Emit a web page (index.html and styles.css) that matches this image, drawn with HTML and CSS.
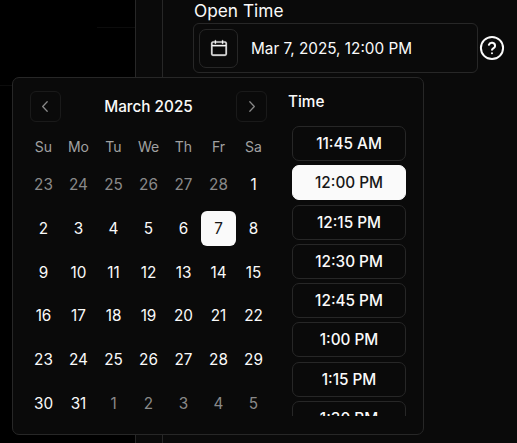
FILE: index.html
```
<!DOCTYPE html>
<html lang="en">
<head>
<meta charset="utf-8">
<title>Open Time</title>
<link rel="stylesheet" href="styles.css">
</head>
<body>
<div class="page">
  <aside class="side"><div class="rule rule-top"></div><div class="rule rule-low"></div></aside>
  <main class="sheet">
    <section class="form">
      <label class="label">Open Time</label>
      <div class="row">
        <div class="field">
          <button class="cal-btn"><svg width="18" height="18" viewBox="0 0 15 15" fill="currentColor"><path fill-rule="evenodd" d="M4.5 1a.5.5 0 0 1 .5.5V2h5v-.5a.5.5 0 0 1 1 0V2h1.5A1.5 1.5 0 0 1 14 3.500v9a1.500 1.500 0 0 1-1.500 1.500h-10A1.500 1.500 0 0 1 1 12.500v-9A1.500 1.500 0 0 1 2.500 2H4v-.5a.5.5 0 0 1 .5-.5ZM10 3v.5a.5.5 0 0 0 1 0V3h1.500a.5.5 0 0 1 .5.5V5H2V3.500a.5.5 0 0 1 .5-.5H4v.5a.5.5 0 0 0 1 0V3h5ZM2 6v6.500a.5.5 0 0 0 .5.5h10a.5.5 0 0 0 .5-.5V6H2Z" stroke="currentColor" stroke-width=".3"/></svg></button>
          <span class="value">Mar 7, 2025, 12:00 PM</span>
        </div>
        <svg class="help" width="28" height="28" viewBox="0 0 24 24" fill="none" stroke="currentColor" stroke-width="1.7" stroke-linecap="round" stroke-linejoin="round"><circle cx="12" cy="12" r="9.500"/><path d="M9.300 9.300a2.750 2.750 0 0 1 5.350.9c0 1.750-2.650 2.300-2.650 3.400M12 16.400v.1"/></svg>
      </div>
    </section>
  </main>
</div>
<div class="popover">
  <div class="calendar">
    <div class="head">
      <button class="nav"><svg width="17" height="17" viewBox="0 0 15 15" fill="none" stroke="currentColor" stroke-width="1.1" stroke-linecap="round" stroke-linejoin="round"><path d="M9 3.300 5 7.500l4 4.200"/></svg></button>
      <span class="month">March 2025</span>
      <button class="nav"><svg width="17" height="17" viewBox="0 0 15 15" fill="none" stroke="currentColor" stroke-width="1.1" stroke-linecap="round" stroke-linejoin="round"><path d="m6 3.300 4 4.200-4 4.200"/></svg></button>
    </div>
    <div class="week names"><span>Su</span><span>Mo</span><span>Tu</span><span>We</span><span>Th</span><span>Fr</span><span>Sa</span></div>
    <div class="week"><span class="out">23</span><span class="out">24</span><span class="out">25</span><span class="out">26</span><span class="out">27</span><span class="out">28</span><span>1</span></div>
    <div class="week"><span>2</span><span>3</span><span>4</span><span>5</span><span>6</span><span class="selected">7</span><span>8</span></div>
    <div class="week"><span>9</span><span>10</span><span>11</span><span>12</span><span>13</span><span>14</span><span>15</span></div>
    <div class="week"><span>16</span><span>17</span><span>18</span><span>19</span><span>20</span><span>21</span><span>22</span></div>
    <div class="week"><span>23</span><span>24</span><span>25</span><span>26</span><span>27</span><span>28</span><span>29</span></div>
    <div class="week"><span>30</span><span>31</span><span class="out">1</span><span class="out">2</span><span class="out">3</span><span class="out">4</span><span class="out">5</span></div>
  </div>
  <div class="times">
    <h2 class="title">Time</h2>
    <div class="list">
      <button class="slot">11:45 AM</button>
      <button class="slot selected">12:00 PM</button>
      <button class="slot">12:15 PM</button>
      <button class="slot">12:30 PM</button>
      <button class="slot">12:45 PM</button>
      <button class="slot">1:00 PM</button>
      <button class="slot">1:15 PM</button>
      <button class="slot">1:30 PM</button>
    </div>
  </div>
</div>
</body>
</html>
```
FILE: styles.css
```
* { box-sizing: border-box; }
body { margin: 0; background: #000; color: #fafafa; font-family: Inter, sans-serif; overflow: hidden; }
button { margin: 0; padding: 0; background: none; color: inherit; font: inherit; display: flex; align-items: center; justify-content: center; }
.page { display: flex; height: 443px; }
.side { width: 135px; }
.rule { height: 1px; background: #0c0c0c; }
.rule-top { margin: 27px 0 0 97px; }
.rule-low { margin-top: 57px; }
.sheet { flex: 1; padding-left: 26px; background: #0a0a0a; border-left: 1px solid #272727; }
.form { height: 100%; padding-left: 30px; border-left: 1px solid #272727; }
.label { display: block; height: 23px; padding-left: 1px; font-size: 17.3px; line-height: 21px; }
.row { display: flex; align-items: center; }
.field { display: flex; align-items: center; width: 285px; height: 50px; padding-left: 5px; border: 1px solid #272727; border-radius: 6px; }
.cal-btn { width: 39px; height: 39px; border: 1px solid #272727; border-radius: 7px; }
.value { margin-left: 13px; font-size: 15.3px; white-space: nowrap; }
.help { flex: none; }

.popover { position: absolute; left: 12px; top: 77px; width: 412px; height: 358px; display: flex; padding: 13px 16px 0 13px; background: #0a0a0a; border: 1px solid #272727; border-radius: 7px; }
.calendar { flex: none; width: 245px; }
.head { display: flex; align-items: center; justify-content: space-between; height: 31px; padding: 0 4px; }
.nav { width: 31px; height: 31px; border: 1px solid #1a1a1a; border-radius: 6px; color: #898989; }
.month { font-size: 15.3px; font-weight: 500; }
.week { display: grid; grid-template-columns: repeat(7, 1fr); height: 35px; margin-top: 8.750px; font-size: 15.3px; text-align: center; line-height: 35px; }
.names { height: 20px; margin-top: 15px; line-height: 20px; font-size: 14px; color: #a1a1a1; }
.names + .week { margin-top: 10px; }
.out { color: #898989; }
.selected { background: #fafafa; color: #171717; border-radius: 6px; }
.times { flex: none; display: flex; flex-direction: column; width: 136px; height: 325px; padding-left: 17px; }
.title { margin: 0; height: 35px; font-size: 15.3px; line-height: 22px; font-weight: 500; }
.list { display: flex; flex-direction: column; gap: 4.250px; width: 118px; height: 290px; padding-left: 4px; overflow: hidden; }
.slot { flex: none; width: 114px; height: 35px; border: 1px solid #272727; border-radius: 7px; font-size: 15.3px; font-weight: 500; }
.slot.selected { border-color: #fafafa; }
```
